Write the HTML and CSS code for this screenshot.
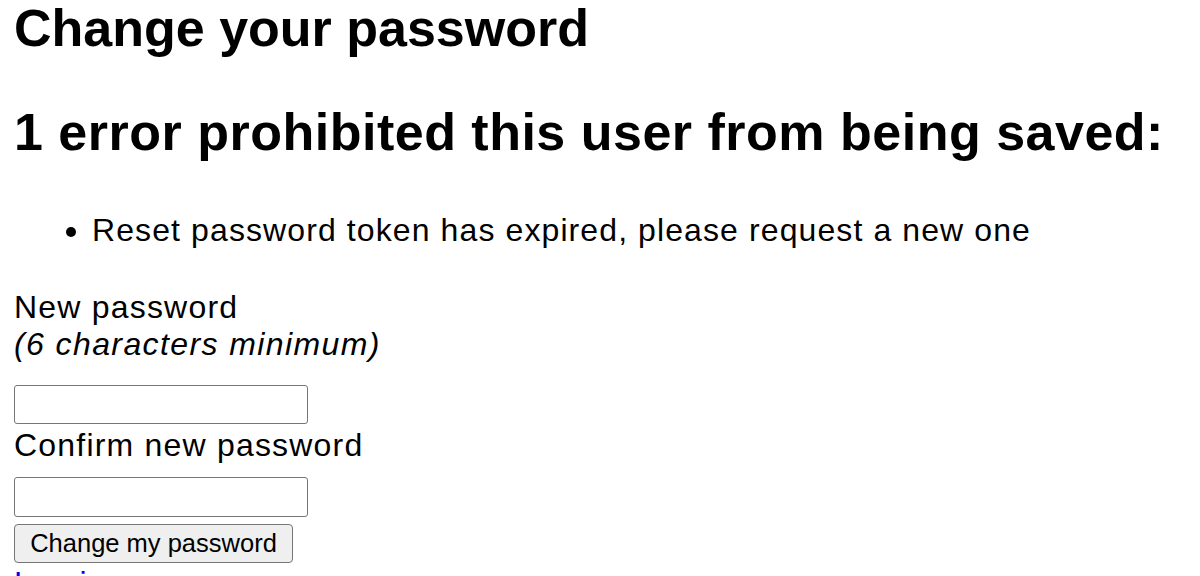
FILE: index.html
```html
<!DOCTYPE html>
<html lang="en">
<head>
<meta charset="utf-8">
<title>Change your password</title>
<link rel="stylesheet" href="styles.css">
</head>
<body>
<h2 class="title">Change your password</h2>
<form class="form" action="#" method="post">
  <div class="errors">
    <h2 class="errors-title">1 error prohibited this user from being saved:</h2>
    <ul class="errors-list">
      <li>Reset password token has expired, please request a new one</li>
    </ul>
  </div>
  <div class="field field-first">
    <label class="label" for="pw">New password</label>
    <em class="hint">(6 characters minimum)</em>
    <input class="input input-first" id="pw" type="password">
  </div>
  <div class="field">
    <label class="label" for="pw2">Confirm new password</label>
    <input class="input input-second" id="pw2" type="password">
  </div>
  <div class="actions">
    <button class="button" type="submit">Change my password</button>
  </div>
</form>
<div class="links">
  <a class="link" href="#">Log in</a>
</div>
</body>
</html>
```
FILE: styles.css
```css
html, body {
  margin: 0;
  padding: 0;
  background: #ffffff;
}
body {
  padding: 0 14px;
  font-family: "Liberation Sans", Arial, sans-serif;
  color: #000;
  font-size: 32px;
  line-height: 37px;
  letter-spacing: 0.8px;
}
.title {
  margin: 0;
  font-size: 52px;
  line-height: 56px;
  font-weight: bold;
  letter-spacing: 0;
}
.form {
  margin: 0;
}
.errors-title {
  margin: 48px 0 0;
  font-size: 52px;
  line-height: 56px;
  font-weight: bold;
  letter-spacing: 0.5px;
}
.errors-list {
  margin: 52px 0 0;
  padding-left: 78px;
  list-style: disc;
  letter-spacing: 1.1px;
}
.errors-list li::marker {
  letter-spacing: 6px;
}
.field {
  display: flex;
  flex-direction: column;
  align-items: flex-start;
}
.field-first {
  margin-top: 40px;
}
.label {
  display: block;
  letter-spacing: 1.2px;
}
.hint {
  display: block;
  font-style: italic;
  letter-spacing: 1.4px;
}
.input {
  display: block;
  box-sizing: border-box;
  width: 294px;
  height: 39px;
  margin: 0;
  border: 1px solid #767676;
  border-radius: 3px;
  background: #fff;
  font-size: 26px;
}
.input-first {
  margin-top: 22px;
  margin-bottom: 3px;
}
.input-second {
  margin-top: 13px;
  height: 40px;
}
.actions {
  margin-top: 7px;
}
.button {
  display: block;
  box-sizing: border-box;
  width: 279px;
  height: 39px;
  margin: 0;
  padding: 0;
  border: 1px solid #767676;
  border-radius: 4px;
  background: #efefef;
  font-family: "Liberation Sans", Arial, sans-serif;
  font-size: 25.5px;
  color: #000;
  letter-spacing: 0;
}
.links {
  margin-top: 2px;
}
.link {
  color: #0000ee;
  text-decoration: underline;
}
```
